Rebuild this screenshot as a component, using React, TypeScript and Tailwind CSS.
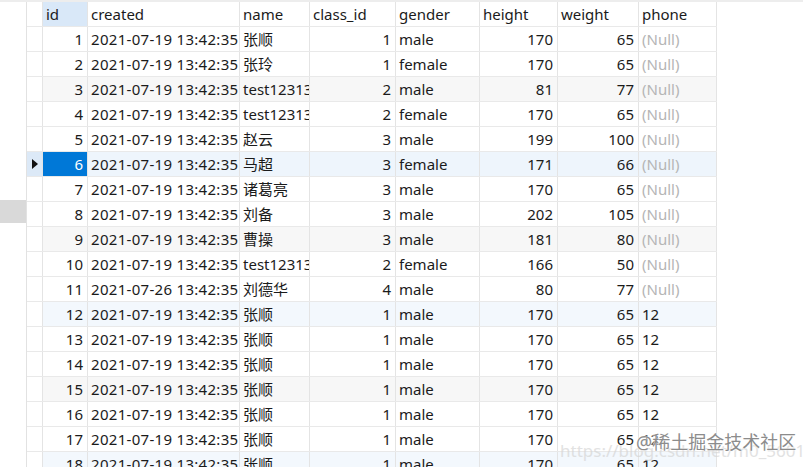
import React from 'react';

type Row = {
  id: number;
  created: string;
  name: string;
  classId: number;
  gender: string;
  height: number;
  weight: number;
  phone: string | null;
};

const D1 = '2021-07-19 13:42:35';

const rows: Row[] = [
  { id: 1, created: D1, name: '张顺', classId: 1, gender: 'male', height: 170, weight: 65, phone: null },
  { id: 2, created: D1, name: '张玲', classId: 1, gender: 'female', height: 170, weight: 65, phone: null },
  { id: 3, created: D1, name: 'test12313', classId: 2, gender: 'male', height: 81, weight: 77, phone: null },
  { id: 4, created: D1, name: 'test12313', classId: 2, gender: 'female', height: 170, weight: 65, phone: null },
  { id: 5, created: D1, name: '赵云', classId: 3, gender: 'male', height: 199, weight: 100, phone: null },
  { id: 6, created: D1, name: '马超', classId: 3, gender: 'female', height: 171, weight: 66, phone: null },
  { id: 7, created: D1, name: '诸葛亮', classId: 3, gender: 'male', height: 170, weight: 65, phone: null },
  { id: 8, created: D1, name: '刘备', classId: 3, gender: 'male', height: 202, weight: 105, phone: null },
  { id: 9, created: D1, name: '曹操', classId: 3, gender: 'male', height: 181, weight: 80, phone: null },
  { id: 10, created: D1, name: 'test12313', classId: 2, gender: 'female', height: 166, weight: 50, phone: null },
  { id: 11, created: '2021-07-26 13:42:35', name: '刘德华', classId: 4, gender: 'male', height: 80, weight: 77, phone: null },
  ...[12, 13, 14, 15, 16, 17, 18].map((id) => ({
    id,
    created: D1,
    name: '张顺',
    classId: 1,
    gender: 'male',
    height: 170,
    weight: 65,
    phone: '12',
  })),
];

const cell = 'h-full border-r border-[#e4e4e4] overflow-hidden whitespace-nowrap flex items-center';
const num = cell + ' justify-end pr-[4px]';
const txt = cell + ' pl-[3px]';

function rowBg(id: number) {
  if (id === 6) return 'bg-[#eef5fc]';
  if (id % 6 === 3) return 'bg-[#f7f7f7]';
  if (id % 6 === 0) return 'bg-[#f3f8fd]';
  return 'bg-white';
}

const grid =
  'grid grid-cols-[16px_45px_152px_70px_86px_84px_78px_81px_78px] h-[25px] border-b border-[#e9e9e9]';

export default function App() {
  return (
    <div
      className="w-[803px] h-[467px] overflow-hidden bg-white text-[15px] text-[#1b1b1b] relative"
      style={{ fontFamily: '"Noto Sans", "Noto Sans CJK SC", sans-serif' }}
    >
      <div className="h-[2px] bg-[#ededed]" />
      <div className="flex">
        <div className="w-[27px] shrink-0 border-r border-[#e2e2e2] h-[465px] flex flex-col">
          <div className="h-[198px]" />
          <div className="h-[23px] w-[26px] bg-[#d9d9d9]" />
        </div>
        <div className="flex flex-col">
          <div className={grid + ' border-[#dcdcdc]'}>
            <div className={cell} />
            <div className={txt + ' bg-[#d9e8f8]'}>id</div>
            <div className={txt}>created</div>
            <div className={txt}>name</div>
            <div className={txt}>class_id</div>
            <div className={txt}>gender</div>
            <div className={txt}>height</div>
            <div className={txt}>weight</div>
            <div className={txt}>phone</div>
          </div>
          {rows.map((r) => {
            const sel = r.id === 6;
            return (
              <div key={r.id} className={grid + ' ' + rowBg(r.id)}>
                <div className={cell + ' justify-center ' + (sel ? 'bg-[#dce9f7]' : 'bg-white')}>
                  {sel && (
                    <svg width="8" height="12" viewBox="0 0 8 12">
                      <path d="M1 1 L7 6 L1 11 Z" fill="#111" />
                    </svg>
                  )}
                </div>
                <div className={num + (sel ? ' bg-[#0078d7] text-white' : '')}>{r.id}</div>
                <div className={txt + ' tracking-[0.3px]'}>{r.created}</div>
                <div className={txt + ' pl-[2px]'}>{r.name}</div>
                <div className={num}>{r.classId}</div>
                <div className={txt}>{r.gender}</div>
                <div className={num}>{r.height}</div>
                <div className={num}>{r.weight}</div>
                <div className={txt + (r.phone ? '' : ' text-[#b5b5b5]')}>{r.phone ?? '(Null)'}</div>
              </div>
            );
          })}
        </div>
      </div>
      <div className="absolute left-[560px] top-[438px] text-[17px] text-[#d6d6d6] whitespace-nowrap opacity-70">
        https://blog.csdn.net/m0_56012713
      </div>
      <div
        className="absolute left-[636px] top-[429px] text-[18px] text-[#8c8c8c] whitespace-nowrap"
        style={{ textShadow: '0 0 2px #fff, 0 0 2px #fff' }}
      >
        @稀土掘金技术社区
      </div>
    </div>
  );
}
